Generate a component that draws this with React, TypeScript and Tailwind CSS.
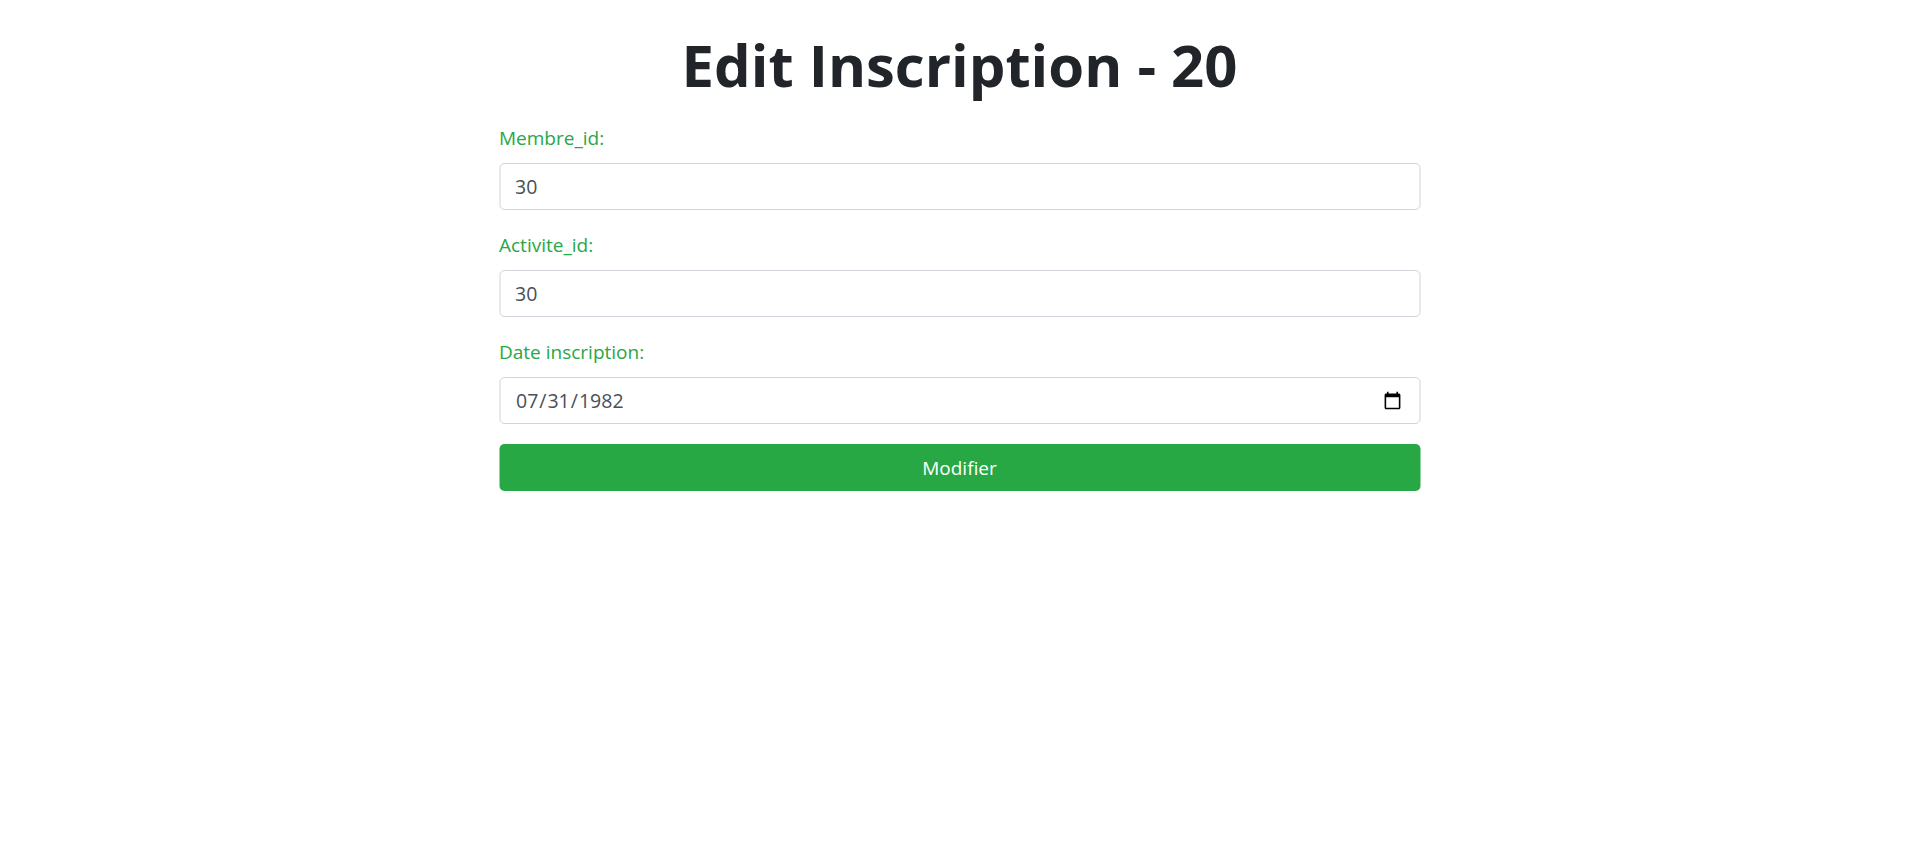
import React, { useState } from "react";

const font = { fontFamily: '"Open Sans", "Noto Sans", sans-serif' };

type FieldProps = {
  label: string;
  type: string;
  value: string;
  onChange: (v: string) => void;
};

const Field = ({ label, type, value, onChange }: FieldProps) => (
  <div className="mb-[20px]">
    <label className="mb-[10px] block text-[19px] leading-[30px] text-[#28a745]">
      {label}
    </label>
    <input
      type={type}
      value={value}
      onChange={(e) => onChange(e.target.value)}
      className="block h-[47px] w-full rounded-[5px] border border-[#ced4da] bg-white px-[15px] text-[19.5px] leading-[30px] text-[#495057] outline-none"
    />
  </div>
);

export default function App() {
  const [membre, setMembre] = useState("30");
  const [activite, setActivite] = useState("30");
  const [date, setDate] = useState("1982-07-31");

  return (
    <div className="min-h-screen bg-white" style={font}>
      <div className="mx-auto w-[921px] translate-x-[0.5px]">
        <h1 className="mb-[22px] pt-[29px] text-center text-[58px] font-bold leading-[72px] text-[#212529]">
          Edit Inscription - 20
        </h1>
        <form onSubmit={(e) => e.preventDefault()}>
          <Field label="Membre_id:" type="text" value={membre} onChange={setMembre} />
          <Field label="Activite_id:" type="text" value={activite} onChange={setActivite} />
          <Field label="Date inscription:" type="date" value={date} onChange={setDate} />
          <button
            type="submit"
            className="mt-[1px] block h-[47px] w-full rounded-[5px] bg-[#28a745] text-[19px] leading-[30px] text-white"
          >
            Modifier
          </button>
        </form>
      </div>
    </div>
  );
}
